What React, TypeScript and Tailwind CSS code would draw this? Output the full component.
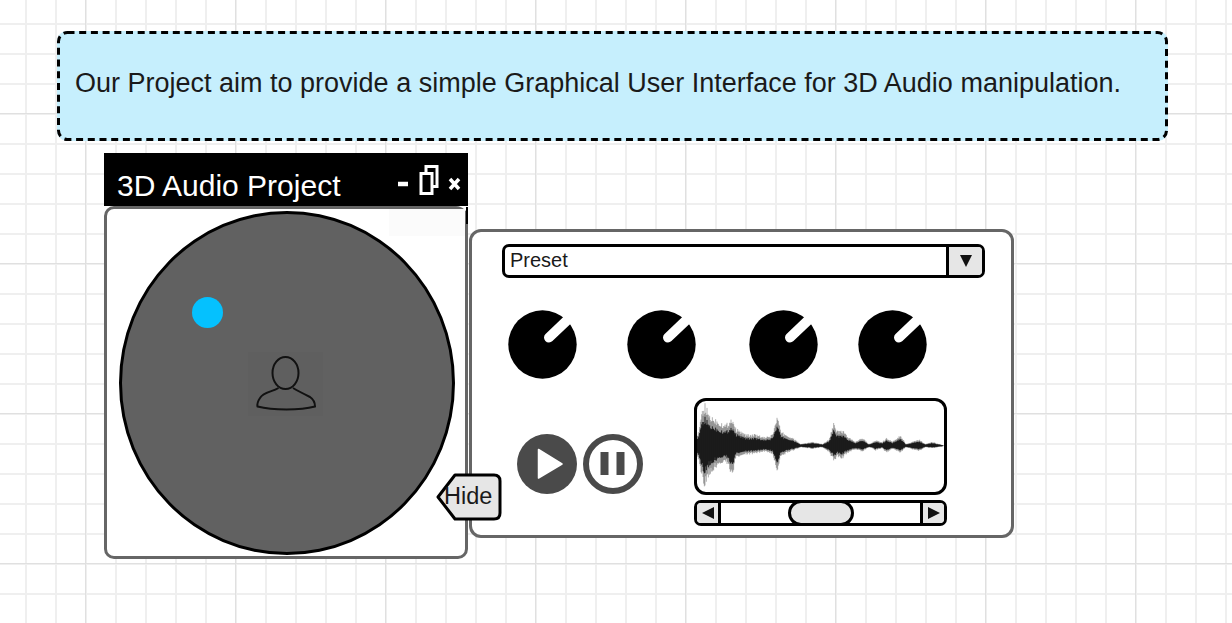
import React from "react";

const env: [number, number, number][] = [
  [0, 150, 195], [12, 125, 215], [22, 55, 275], [30, 42, 298], [42, 70, 265], [52, 80, 250], [72, 92, 230],
  [92, 105, 220], [112, 80, 268], [122, 115, 210], [152, 135, 198], [182, 135, 195], [212, 145, 188],
  [232, 135, 195], [247, 76, 248], [257, 125, 205], [282, 140, 190], [302, 152, 182], [317, 165, 175],
  [352, 158, 180], [382, 165, 175], [402, 150, 190], [417, 96, 218], [427, 125, 205], [442, 120, 210],
  [462, 145, 190], [482, 158, 182], [502, 146, 188], [522, 165, 175], [542, 152, 185], [562, 160, 178],
  [574, 144, 192], [592, 158, 180], [617, 136, 192], [632, 165, 175], [652, 158, 182], [672, 150, 187],
  [692, 165, 175], [712, 158, 178], [745, 169, 172],
];

function sample(x: number): [number, number] {
  for (let i = 0; i < env.length - 1; i++) {
    const a = env[i];
    const b = env[i + 1];
    if (x >= a[0] && x <= b[0]) {
      const t = (x - a[0]) / (b[0] - a[0]);
      return [a[1] + (b[1] - a[1]) * t, a[2] + (b[2] - a[2]) * t];
    }
  }
  return [169, 172];
}

function noise(x: number) {
  const s = Math.sin(x * 12.9898) * 43758.5453;
  return s - Math.floor(s);
}

type Bar = { x: number; y1: number; y2: number; o: number };

function waveBars(): Bar[] {
  const bars: Bar[] = [];
  for (let x = 0; x <= 745; x += 2) {
    const [t, b] = sample(x);
    const c = 170;
    const n = 0.72 + 0.28 * noise(x);
    const m = 0.72 + 0.28 * noise(x + 91);
    bars.push({ x, y1: c - (c - t) * n, y2: c + (b - c) * m, o: 0.4 });
    bars.push({ x, y1: c - (c - t) * n * 0.68, y2: c + (b - c) * m * 0.68, o: 1 });
  }
  return bars;
}

const bars = waveBars();

function Knob({ className }: { className: string }) {
  return (
    <svg viewBox="0 0 69 69" className={`h-[69px] w-[69px] shrink-0 ${className}`}>
      <circle cx="34.5" cy="34.5" r="34.2" fill="#000" />
      <line x1="41" y1="27.5" x2="72" y2="-2" stroke="#fff" strokeWidth="10" strokeLinecap="round" />
    </svg>
  );
}

export default function App() {
  return (
    <div className="relative h-[623px] w-[1232px] overflow-hidden bg-white pt-[31px] font-['Liberation_Sans',Arial,sans-serif] [background-image:linear-gradient(to_right,#e0e0e0_1px,transparent_1px),linear-gradient(to_bottom,#e0e0e0_1px,transparent_1px),linear-gradient(to_right,#efefef_2px,transparent_2px),linear-gradient(to_bottom,#efefef_2px,transparent_2px)] [background-position:85px_113px,85px_113px,25px_23px,25px_23px] [background-size:150px_150px,150px_150px,30px_30px,30px_30px]">
      <div className="relative ml-[57px] flex h-[110px] w-[1111px] items-center rounded-[10px] bg-[#c6effd] pb-[6px] pl-[18px] text-[27px] leading-none text-[#1a1a1a]">
        <svg viewBox="0 0 1111 110" className="absolute inset-0 h-[110px] w-[1111px]" fill="none">
          <rect x="1.5" y="1.5" width="1108" height="107" rx="9" stroke="#000" strokeWidth="3" strokeDasharray="7 4.7" />
        </svg>
        Our Project aim to provide a simple Graphical User Interface for 3D Audio manipulation.
      </div>

      <div className="ml-[104px] mt-[12px] flex items-start">
        <div className="relative w-[364px]">
          <div className="flex h-[53px] w-[364px] items-end justify-between bg-black pb-[1px] pl-[13px] pr-[7px] text-white">
            <span className="text-[30px] leading-[38px]">3D Audio Project</span>
            <svg viewBox="0 0 64 32" className="mb-[8px] h-[32px] w-[64px]" fill="none" stroke="#fff">
              <line x1="1" y1="19" x2="11" y2="19" strokeWidth="4.5" />
              <rect x="29" y="1.5" width="11" height="20" strokeWidth="3" />
              <rect x="24" y="8.5" width="11" height="20" strokeWidth="3" fill="#000" />
              <path d="M53 14 L62 24 M62 14 L53 24" strokeWidth="3.5" />
            </svg>
          </div>
          <div className="relative h-[353px] w-[364px] rounded-[10px] rounded-tr-[12px] border-[3px] border-[#666] bg-white pl-[12px] pt-[2px]">
            <div className="absolute right-0 top-0 h-[27px] w-[76px] bg-[#fbfbfb]" />
            <div className="absolute -right-[3px] -top-[2px] h-[17px] w-[2px] bg-black" />
            <div className="relative h-[344px] w-[336px] rounded-[50%] border-[3px] border-black bg-[#616161]">
              <div className="absolute left-[70px] top-[83px] h-[31px] w-[31px] rounded-full bg-[#05c1fe]" />
              <div className="absolute left-[126px] top-[138px] h-[64px] w-[75px] bg-[#5f5f5f]">
                <svg viewBox="0 0 75 64" className="h-full w-full" fill="none" stroke="#111" strokeWidth="2">
                  <ellipse cx="37.5" cy="21" rx="13" ry="16" />
                  <path d="M30.5 36 C24 40 15 40 12 46 C10 49 9 52 9.5 54.5 C25 58.5 52 58.5 67 54.5 C67 50 65 47 62 45 C56 42 50 39 45 36" />
                </svg>
              </div>
            </div>
          </div>
          <svg viewBox="0 0 66 48" className="absolute left-[332px] top-[320px] h-[48px] w-[66px]">
            <path d="M19 2 H58 Q64 2 64 8 V40 Q64 46 58 46 H19 L2 24 Z" fill="#e6e6e6" stroke="#000" strokeWidth="3" strokeLinejoin="round" />
          </svg>
          <span className="absolute left-[340px] top-[330px] text-[23.5px] leading-[27px] text-[#1a1a1a]">Hide</span>
        </div>

        <div className="ml-[1px] mt-[76px] flex h-[309px] w-[545px] flex-col rounded-[12px] border-[3px] border-[#666] bg-white pl-[30px] pt-[12px]">
          <div className="flex h-[34px] w-[483px] overflow-hidden rounded-[7px] border-[3px] border-black bg-white">
            <span className="flex-1 pl-[5px] text-[20px] leading-[27px] text-[#1a1a1a]">Preset</span>
            <div className="flex w-[36px] items-center justify-center border-l-[3px] border-black bg-[#e6e6e6]">
              <svg viewBox="0 0 12 12" className="h-[12px] w-[12px]">
                <path d="M0 0 H12 L6 12 Z" fill="#111" />
              </svg>
            </div>
          </div>

          <div className="ml-[6px] mt-[32px] flex">
            <Knob className="" />
            <Knob className="ml-[50px]" />
            <Knob className="ml-[53px]" />
            <Knob className="ml-[40px]" />
          </div>

          <div className="mt-[19px] flex items-start">
            <div className="ml-[15px] mt-[36px] flex gap-[6px]">
              <svg viewBox="0 0 60 60" className="h-[60px] w-[60px]">
                <circle cx="30" cy="30" r="30" fill="#4a4a4a" />
                <path d="M21.5 15.5 L45 30 L21.5 44 Z" fill="#fff" strokeLinejoin="round" stroke="#fff" strokeWidth="1.5" />
              </svg>
              <svg viewBox="0 0 60 60" className="h-[60px] w-[60px]">
                <circle cx="30" cy="30" r="27" fill="#fff" stroke="#4a4a4a" strokeWidth="6" />
                <rect x="17.5" y="18" width="8" height="23" fill="#4a4a4a" />
                <rect x="33.5" y="18" width="8" height="23" fill="#4a4a4a" />
              </svg>
            </div>
            <div className="ml-[51px] flex w-[253px] flex-col gap-[5px]">
              <div className="h-[97px] w-[253px] overflow-hidden rounded-[12px] border-[3px] border-black bg-white">
                <svg viewBox="6 36 741 273" className="h-[91px] w-[247px]" preserveAspectRatio="none">
                  <defs>
                    <filter id="soft" x="-5%" y="-5%" width="110%" height="110%">
                      <feGaussianBlur stdDeviation="1.4" />
                    </filter>
                  </defs>
                  <g filter="url(#soft)" stroke="#000" strokeWidth="2.4">
                    {bars.map((b, i) => (
                      <line key={i} x1={b.x} x2={b.x} y1={b.y1} y2={b.y2} opacity={b.o} />
                    ))}
                  </g>
                </svg>
              </div>
              <div className="relative flex h-[26px] w-[253px] items-stretch justify-between overflow-hidden rounded-[7px] border-[3px] border-black bg-white">
                <div className="flex w-[24px] items-center justify-center border-r-[3px] border-black bg-[#e6e6e6]">
                  <svg viewBox="0 0 12 12" className="h-[12px] w-[12px]"><path d="M12 0 V12 L0 6 Z" fill="#111" /></svg>
                </div>
                <div className="flex w-[24px] items-center justify-center border-l-[3px] border-black bg-[#e6e6e6]">
                  <svg viewBox="0 0 12 12" className="h-[12px] w-[12px]"><path d="M0 0 V12 L12 6 Z" fill="#111" /></svg>
                </div>
                <div className="absolute left-[91px] top-[-3px] h-[26px] w-[66px] rounded-full border-[3px] border-black bg-[#e6e6e6]" />
              </div>
            </div>
          </div>
        </div>
      </div>
    </div>
  );
}
